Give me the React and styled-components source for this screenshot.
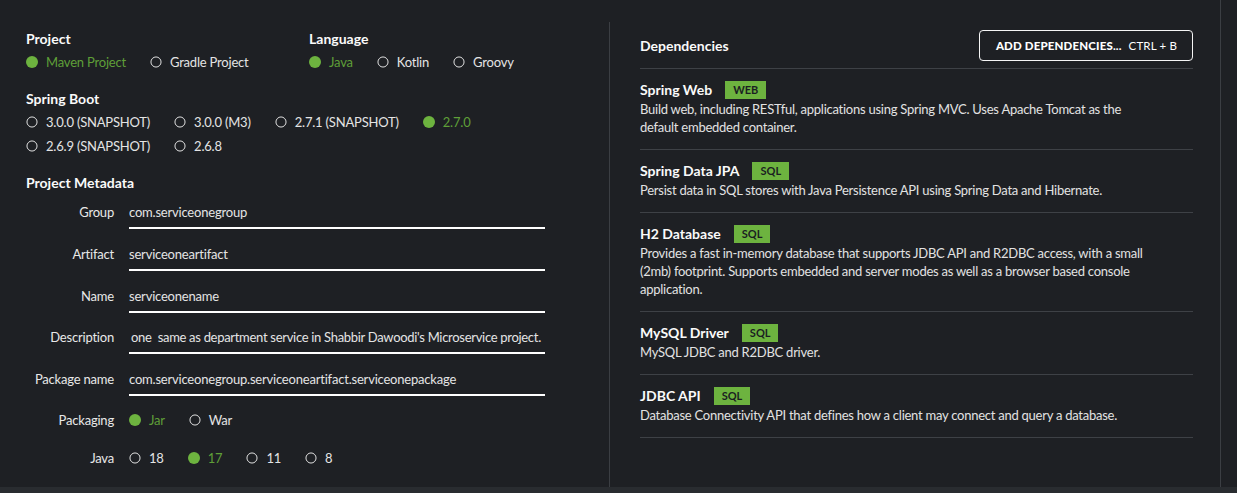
import React from 'react';
import styled, { createGlobalStyle } from 'styled-components';

const GlobalStyle = createGlobalStyle`
  * { box-sizing: border-box; }
  body {
    margin: 0;
    background: #1e2024;
    font-family: Lato, "Open Sans", "Liberation Sans", sans-serif;
    color: #dedede;
  }
`;

const Page = styled.div`
  height: 493px;
  display: flex;
  flex-direction: column;
  background: #1e2024;
  overflow: hidden;
`;

const Shell = styled.div`
  flex: 1;
  display: flex;
  min-height: 0;
`;

const Content = styled.div`
  width: 1221px;
  display: flex;
  padding-top: 22px;
  border-right: 1px solid #3b3e43;
`;

const BottomBar = styled.div`
  height: 6px;
  background: #292c30;
`;

const LeftCol = styled.div`
  width: 610px;
  padding: 8px 0 0 26px;
  border-right: 1px solid #3b3e43;
`;

const RightCol = styled.div`
  flex: 1;
  padding: 8px 27px 0 30px;
`;

const Heading = styled.h2`
  margin: 0;
  font-size: 14px;
  line-height: 18px;
  font-weight: 700;
  color: #fafafa;
`;

const TopGrid = styled.div`
  display: grid;
  grid-template-columns: 283px auto;
`;

const Section = styled.div`
  display: flex;
  flex-direction: column;
  gap: 5px;
  margin-top: ${(p) => p.$top || 0}px;
`;

const RadioRow = styled.div`
  display: flex;
  flex-wrap: wrap;
  row-gap: 6px;
  width: ${(p) => (p.$width ? `${p.$width}px` : 'auto')};
`;

const RadioItem = styled.label`
  display: flex;
  align-items: center;
  margin-right: 24px;
  font-size: 13px;
  line-height: 18px;
  letter-spacing: -0.2px;
  color: ${(p) => (p.$checked ? '#5f9f38' : '#e4e4e4')};
  white-space: nowrap;
`;

const Dot = styled.span`
  width: 12px;
  height: 12px;
  border-radius: 50%;
  margin-right: 8px;
  flex-shrink: 0;
  background: ${(p) => (p.$checked ? '#6db33f' : 'transparent')};
  border: ${(p) => (p.$checked ? 'none' : '1px solid #f0f0f0')};
  transform: ${(p) => (p.$checked ? 'none' : 'scale(0.92)')};
`;

const MetaGrid = styled.div`
  display: grid;
  grid-template-columns: 88px 416px;
  column-gap: 15px;
`;

const Label = styled.div`
  text-align: right;
  font-size: 13px;
  line-height: 18px;
  letter-spacing: -0.2px;
  color: #e8e8e8;
  padding-top: ${(p) => (p.$field ? 3 : 0)}px;
  margin-top: ${(p) => p.$top}px;
`;

const Field = styled.div`
  overflow: hidden;
  white-space: pre;
  padding: 3px 0 6px ${(p) => (p.$scrolled ? 2 : 0)}px;
  font-size: 13px;
  line-height: 18px;
  letter-spacing: ${(p) => (p.$scrolled ? -0.3 : -0.2)}px;
  color: #e4e4e4;
  border-bottom: 2px solid #ffffff;
  margin-top: ${(p) => p.$top}px;
`;

const ValueRow = styled(RadioRow)`
  margin-top: ${(p) => p.$top}px;
`;

const DepHeader = styled.div`
  display: flex;
  align-items: center;
  justify-content: space-between;
  padding-bottom: 7px;
  border-bottom: 1px solid #3e4146;
`;

const AddButton = styled.button`
  height: 31px;
  padding: 0 15px 0 16px;
  display: flex;
  align-items: center;
  gap: 7px;
  background: transparent;
  border: 1px solid #f5f5f5;
  border-radius: 4px;
  color: #ffffff;
  font-family: inherit;
  font-size: 11.5px;
  text-transform: uppercase;
  cursor: pointer;
`;

const ButtonMain = styled.span`
  font-weight: 900;
  letter-spacing: 0.15px;
`;

const ButtonKey = styled.span`
  font-weight: 400;
  letter-spacing: 0.15px;
`;

const DepItem = styled.div`
  padding: 12px 0 13px;
  border-bottom: 1px solid #3e4146;
`;

const DepTitle = styled.div`
  display: flex;
  align-items: center;
  gap: 13px;
  font-size: 14px;
  line-height: 18px;
  font-weight: 700;
  color: #fafafa;
  margin-bottom: 1px;
`;

const Badge = styled.span`
  height: 18px;
  padding: 0 8px;
  display: inline-flex;
  align-items: center;
  background: #6db33f;
  color: #1b1e22;
  font-size: 11px;
  font-weight: 700;
`;

const DepText = styled.p`
  margin: 0;
  max-width: 515px;
  font-size: 13px;
  line-height: 18px;
  letter-spacing: -0.25px;
  color: #e2e2e2;
`;

const Radio = ({ label, checked }) => (
  <RadioItem $checked={checked}>
    <Dot $checked={checked} />
    {label}
  </RadioItem>
);

const deps = [
  {
    name: 'Spring Web',
    tag: 'WEB',
    text: 'Build web, including RESTful, applications using Spring MVC. Uses Apache Tomcat as the default embedded container.',
  },
  {
    name: 'Spring Data JPA',
    tag: 'SQL',
    text: 'Persist data in SQL stores with Java Persistence API using Spring Data and Hibernate.',
  },
  {
    name: 'H2 Database',
    tag: 'SQL',
    text: 'Provides a fast in-memory database that supports JDBC API and R2DBC access, with a small (2mb) footprint. Supports embedded and server modes as well as a browser based console application.',
  },
  { name: 'MySQL Driver', tag: 'SQL', text: 'MySQL JDBC and R2DBC driver.' },
  {
    name: 'JDBC API',
    tag: 'SQL',
    text: 'Database Connectivity API that defines how a client may connect and query a database.',
  },
];

const fields = [
  { label: 'Group', value: 'com.serviceonegroup' },
  { label: 'Artifact', value: 'serviceoneartifact' },
  { label: 'Name', value: 'serviceonename' },
  {
    label: 'Description',
    value: "one  same as department service in Shabbir Dawoodi's Microservice project.",
    scrolled: true,
  },
  { label: 'Package name', value: 'com.serviceonegroup.serviceoneartifact.serviceonepackage' },
];

export default function App() {
  return (
    <Page>
      <GlobalStyle />
      <Shell>
        <Content>
          <LeftCol>
            <TopGrid>
              <Section>
                <Heading>Project</Heading>
                <RadioRow>
                  <Radio label="Maven Project" checked />
                  <Radio label="Gradle Project" />
                </RadioRow>
              </Section>
              <Section>
                <Heading>Language</Heading>
                <RadioRow>
                  <Radio label="Java" checked />
                  <Radio label="Kotlin" />
                  <Radio label="Groovy" />
                </RadioRow>
              </Section>
            </TopGrid>

            <Section $top={19}>
              <Heading>Spring Boot</Heading>
              <RadioRow $width={519}>
                <Radio label="3.0.0 (SNAPSHOT)" />
                <Radio label="3.0.0 (M3)" />
                <Radio label="2.7.1 (SNAPSHOT)" />
                <Radio label="2.7.0" checked />
                <Radio label="2.6.9 (SNAPSHOT)" />
                <Radio label="2.6.8" />
              </RadioRow>
            </Section>

            <Section $top={19}>
              <Heading>Project Metadata</Heading>
            </Section>
            <MetaGrid>
              {fields.map((f, i) => (
                <React.Fragment key={f.label}>
                  <Label $field $top={i === 0 ? 8 : 12.75}>{f.label}</Label>
                  <Field $top={i === 0 ? 8 : 12.75} $scrolled={f.scrolled}>
                    {f.value}
                  </Field>
                </React.Fragment>
              ))}
              <Label $top={15}>Packaging</Label>
              <ValueRow $top={15}>
                <Radio label="Jar" checked />
                <Radio label="War" />
              </ValueRow>
              <Label $top={20}>Java</Label>
              <ValueRow $top={20}>
                <Radio label="18" />
                <Radio label="17" checked />
                <Radio label="11" />
                <Radio label="8" />
              </ValueRow>
            </MetaGrid>
          </LeftCol>

          <RightCol>
            <DepHeader>
              <Heading>Dependencies</Heading>
              <AddButton>
                <ButtonMain>Add dependencies...</ButtonMain>
                <ButtonKey>Ctrl + B</ButtonKey>
              </AddButton>
            </DepHeader>
            {deps.map((d) => (
              <DepItem key={d.name}>
                <DepTitle>
                  {d.name}
                  <Badge>{d.tag}</Badge>
                </DepTitle>
                <DepText>{d.text}</DepText>
              </DepItem>
            ))}
          </RightCol>
        </Content>
      </Shell>
      <BottomBar />
    </Page>
  );
}
